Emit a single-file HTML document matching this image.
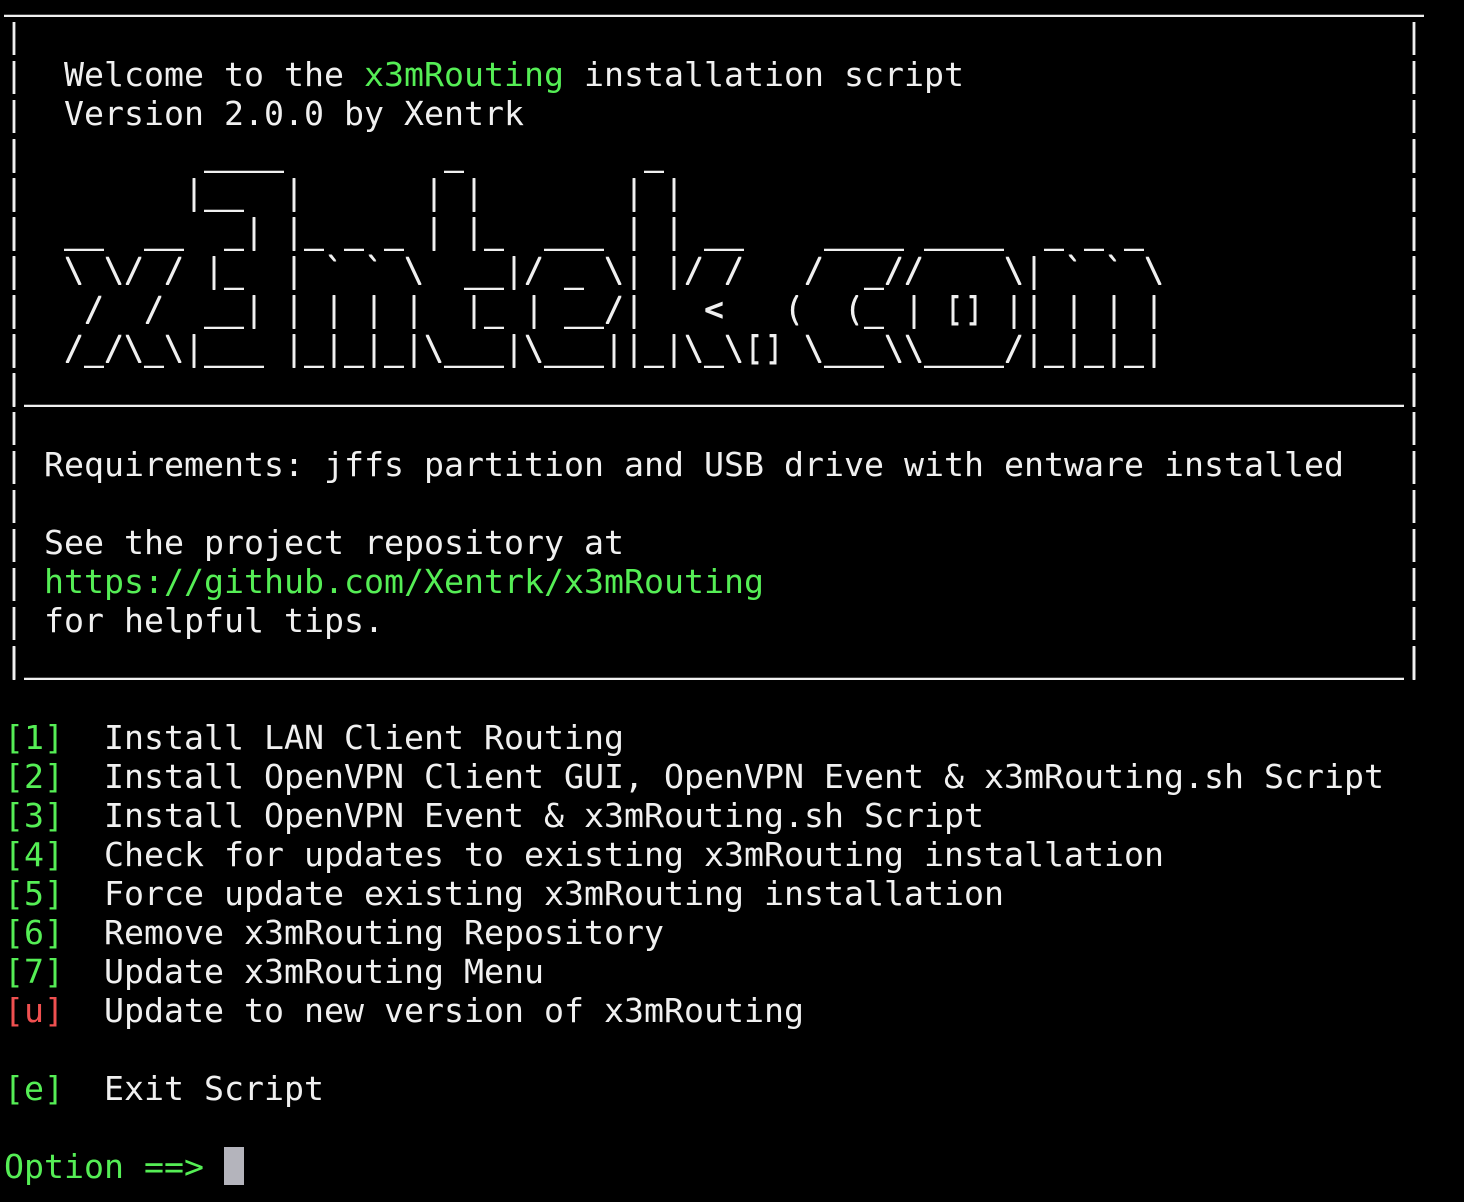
<!DOCTYPE html>
<html><head><meta charset="utf-8">
<style>
html,body{margin:0;padding:0;background:#000;width:1464px;height:1202px;overflow:hidden;}
#t{position:absolute;left:4px;top:-23.5px;font-family:"DejaVu Sans Mono","Liberation Mono",monospace;font-size:33.22px;color:#f0f0f0;}
.l{position:relative;height:39px;line-height:39px;white-space:pre;}
.u{text-shadow:0 1px 0 #f0f0f0;}
.r{position:absolute;left:1400px;top:0;}
.g{color:#55ee55;}
.red{color:#f05050;}
.cur{display:inline-block;width:20px;height:38px;background:#b4b4bc;vertical-align:middle;position:relative;top:-2px;}
</style></head><body>
<div id="t">
<div class="l u">_______________________________________________________________________</div>
<div class="l">|<span class="r">|</span></div>
<div class="l">|  Welcome to the <span class="g">x3mRouting</span> installation script<span class="r">|</span></div>
<div class="l">|  Version 2.0.0 by Xentrk<span class="r">|</span></div>
<div class="l u">|         ____        _         _<span class="r">|</span></div>
<div class="l u">|        |__  |      | |       | |<span class="r">|</span></div>
<div class="l u">|  __  __  _| |_ _ _ | |_  ___ | | __    ____ ____  _ _ _<span class="r">|</span></div>
<div class="l u">|  \ \/ / |_  | ` ` \  __|/ _ \| |/ /   /  _//    \| ` ` \<span class="r">|</span></div>
<div class="l u">|   /  /  __| | | | |  |_ | __/|   <   (  (_ | [] || | | |<span class="r">|</span></div>
<div class="l u">|  /_/\_\|___ |_|_|_|\___|\___||_|\_\[] \___\\____/|_|_|_|<span class="r">|</span></div>
<div class="l u">|_____________________________________________________________________|</div>
<div class="l">|<span class="r">|</span></div>
<div class="l">| Requirements: jffs partition and USB drive with entware installed<span class="r">|</span></div>
<div class="l">|<span class="r">|</span></div>
<div class="l">| See the project repository at<span class="r">|</span></div>
<div class="l">| <span class="g">https://github.com/Xentrk/x3mRouting</span><span class="r">|</span></div>
<div class="l">| for helpful tips.<span class="r">|</span></div>
<div class="l u">|_____________________________________________________________________|</div>
<div class="l"> </div>
<div class="l"><span class="g">[1]</span>  Install LAN Client Routing</div>
<div class="l"><span class="g">[2]</span>  Install OpenVPN Client GUI, OpenVPN Event &amp; x3mRouting.sh Script</div>
<div class="l"><span class="g">[3]</span>  Install OpenVPN Event &amp; x3mRouting.sh Script</div>
<div class="l"><span class="g">[4]</span>  Check for updates to existing x3mRouting installation</div>
<div class="l"><span class="g">[5]</span>  Force update existing x3mRouting installation</div>
<div class="l"><span class="g">[6]</span>  Remove x3mRouting Repository</div>
<div class="l"><span class="g">[7]</span>  Update x3mRouting Menu</div>
<div class="l"><span class="red">[u]</span>  Update to new version of x3mRouting</div>
<div class="l"> </div>
<div class="l"><span class="g">[e]</span>  Exit Script</div>
<div class="l"> </div>
<div class="l"><span class="g">Option ==&gt; </span><span class="cur"></span></div>
</div>
</body></html>
